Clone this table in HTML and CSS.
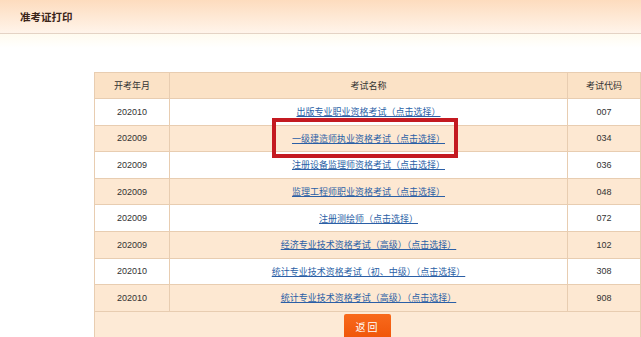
FILE: index.html
```html
<!DOCTYPE html>
<html lang="zh-CN">
<head>
  <meta charset="UTF-8" />
  <meta name="viewport" content="width=device-width, initial-scale=1.0"/>
  <title>准考证打印</title>
  <link rel="stylesheet" href="styles.css">
</head>
<body>
  <div class="topbar">
    <h1>准考证打印</h1>
  </div>
  <div class="topfade"></div>

  <div class="panel">
    <table class="exams">
      <thead>
        <tr>
          <th class="col-date">开考年月</th>
          <th>考试名称</th>
          <th class="col-code">考试代码</th>
        </tr>
      </thead>
      <tbody>
        <tr>
          <td>202010</td>
          <td><a href="#">出版专业职业资格考试（点击选择）</a></td>
          <td>007</td>
        </tr>
        <tr>
          <td>202009</td>
          <td><a href="#">一级建造师执业资格考试（点击选择）</a></td>
          <td>034</td>
        </tr>
        <tr>
          <td>202009</td>
          <td><a href="#">注册设备监理师资格考试（点击选择）</a></td>
          <td>036</td>
        </tr>
        <tr>
          <td>202009</td>
          <td><a href="#">监理工程师职业资格考试（点击选择）</a></td>
          <td>048</td>
        </tr>
        <tr>
          <td>202009</td>
          <td><a href="#">注册测绘师（点击选择）</a></td>
          <td>072</td>
        </tr>
        <tr>
          <td>202009</td>
          <td><a href="#">经济专业技术资格考试（高级）（点击选择）</a></td>
          <td>102</td>
        </tr>
        <tr>
          <td>202010</td>
          <td><a href="#">统计专业技术资格考试（初、中级）（点击选择）</a></td>
          <td>308</td>
        </tr>
        <tr>
          <td>202010</td>
          <td><a href="#">统计专业技术资格考试（高级）（点击选择）</a></td>
          <td>908</td>
        </tr>
      </tbody>
    </table>
    <div class="actions">
      <button class="back">返回</button>
    </div>

    <!-- highlight drawn around the selected exam -->
    <div class="mark"></div>
  </div>
</body>
</html>
```

FILE: styles.css
```css
body {
  margin: 0;
  font-family: "Liberation Sans", "Noto Sans CJK SC", sans-serif;
  background: #fff;
  color: #333;
  overflow: hidden;
}

.topbar {
  height: 33px;
  background: linear-gradient(to bottom, #fddcbe, #fff4ea);
  border-bottom: 1px solid #e4d3c5;
  display: flex;
  align-items: center;
  padding-left: 20px;
}

.topbar h1 {
  margin: 0;
  font-family: "Noto Sans CJK SC", sans-serif;
  font-size: 10.5px;
  font-weight: bold;
  color: #3a2418;
}

.topfade {
  height: 14px;
  background: linear-gradient(to bottom, #fffbef, #fff);
}

.panel {
  position: relative;
  margin: 24px 0 0 94px;
  width: 545px;
  background: #fdead6;
  border: 1px solid #e8cdb1;
  border-bottom: none;
}

.exams {
  width: 100%;
  border-collapse: collapse;
  font-size: 9px;
}

.exams th,
.exams td {
  height: 25.6px;
  padding: 0;
  text-align: center;
  font-weight: normal;
  border-bottom: 1px solid #e8cdb1;
  border-right: 1px solid #e8cdb1;
}

.exams th:last-child,
.exams td:last-child {
  border-right: none;
}

.exams th {
  height: 25px;
  background: #fbe2c6;
  color: #333;
  font-family: "Noto Sans CJK SC", sans-serif;
}

.col-date {
  width: 74px;
}

.col-code {
  width: 72px;
}

.exams tbody tr:nth-child(odd) td {
  background: #fff;
}

.exams tbody tr:nth-child(even) td {
  background: #fde8d2;
}

.exams a {
  color: #2b5fa6;
  text-decoration: underline;
  font-family: "Noto Sans CJK SC", sans-serif;
}

.actions {
  display: flex;
  justify-content: center;
  padding-top: 2px;
  height: 40px;
}

.back {
  width: 47px;
  height: 26px;
  border: none;
  border-radius: 2px;
  background: linear-gradient(to bottom, #f86a1c, #ef5408);
  color: #fff;
  font-family: "Noto Sans CJK SC", sans-serif;
  font-size: 10px;
  letter-spacing: 2px;
  cursor: pointer;
}

.mark {
  position: absolute;
  left: 177px;
  top: 45px;
  width: 178px;
  height: 32px;
  border: 4px solid #c41a21;
}
```
